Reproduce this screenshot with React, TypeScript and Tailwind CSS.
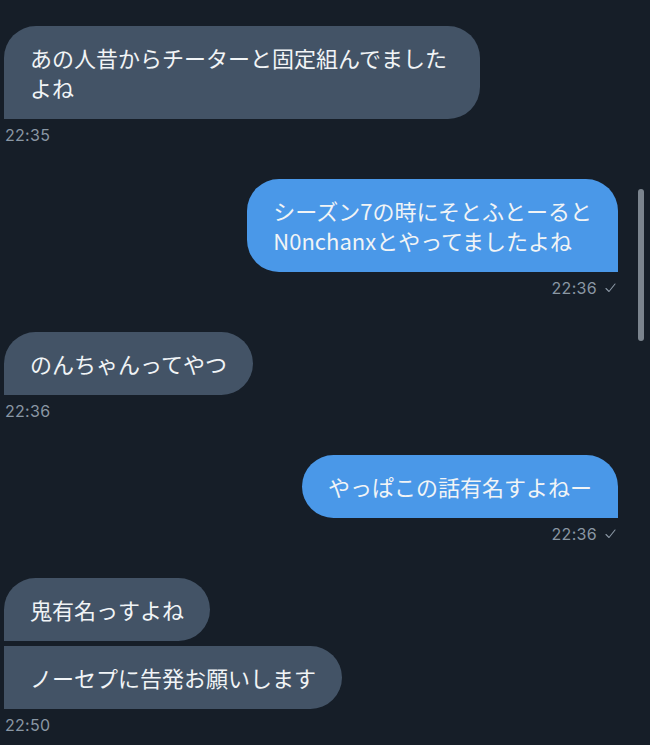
import React from 'react';

type Msg = {
  side: 'in' | 'out';
  lines: string[];
  corner: string;
  width?: string;
};

type Group = {
  side: 'in' | 'out';
  time: string;
  msgs: Msg[];
};

const groups: Group[] = [
  {
    side: 'in',
    time: '22:35',
    msgs: [
      {
        side: 'in',
        lines: ['あの人昔からチーターと固定組んでました', 'よね'],
        corner: 'rounded-bl-none',
        width: 'w-[476px]',
      },
    ],
  },
  {
    side: 'out',
    time: '22:36',
    msgs: [{ side: 'out', lines: ['シーズン7の時にそとふとーると', 'N0nchanxとやってましたよね'], corner: 'rounded-br-none' }],
  },
  {
    side: 'in',
    time: '22:36',
    msgs: [{ side: 'in', lines: ['のんちゃんってやつ'], corner: 'rounded-bl-none' }],
  },
  {
    side: 'out',
    time: '22:36',
    msgs: [{ side: 'out', lines: ['やっぱこの話有名すよねー'], corner: 'rounded-br-none' }],
  },
  {
    side: 'in',
    time: '22:50',
    msgs: [
      { side: 'in', lines: ['鬼有名っすよね'], corner: 'rounded-bl-none' },
      { side: 'in', lines: ['ノーセプに告発お願いします'], corner: 'rounded-l-none' },
    ],
  },
];

function Bubble({ msg }: { msg: Msg }) {
  const color = msg.side === 'in' ? 'bg-[#435366]' : 'bg-[#4a98e8]';
  return (
    <div
      className={`${color} ${msg.corner} ${msg.width ?? ''} rounded-[32px] px-[26px] pt-4 pb-[17px] text-[22px] leading-[30px] text-[#f1f4f6] whitespace-nowrap`}
      style={{ fontFamily: '"Noto Sans CJK JP", "Noto Sans", sans-serif' }}
    >
      {msg.lines.map((l, i) => (
        <div key={i}>{l}</div>
      ))}
    </div>
  );
}

function Check() {
  return (
    <svg width="11" height="10" viewBox="0 0 11 10" className="ml-2" fill="none">
      <path d="M1 5.5 L4 8.5 L10 1" stroke="#8a97a4" strokeWidth="1.1" strokeLinecap="round" strokeLinejoin="round" />
    </svg>
  );
}

export default function App() {
  return (
    <div className="relative w-[650px] h-[745px] overflow-hidden bg-[#161e28]">
      <div className="flex flex-col pt-[26px] pl-1 pr-8">
        {groups.map((g, gi) => (
          <div
            key={gi}
            className={`flex flex-col ${g.side === 'in' ? 'items-start' : 'items-end'} ${gi > 0 ? 'mt-[34px]' : ''}`}
          >
            <div className={`flex flex-col gap-[5px] ${g.side === 'in' ? 'items-start' : 'items-end'}`}>
              {g.msgs.map((m, mi) => (
                <Bubble key={mi} msg={m} />
              ))}
            </div>
            <div
              className={`mt-[6px] flex items-center text-[16px] leading-5 tracking-[0.3px] text-[#8a97a4] ${g.side === 'in' ? 'pl-px' : 'pr-0.5'}`}
              style={{ fontFamily: 'Inter, "Noto Sans", sans-serif' }}
            >
              {g.time}
              {g.side === 'out' && <Check />}
            </div>
          </div>
        ))}
      </div>
      {/* scrollbar */}
      <div className="absolute left-[638px] top-[189px] h-[152px] w-[6px] rounded-full bg-[#7b848e]" />
    </div>
  );
}
